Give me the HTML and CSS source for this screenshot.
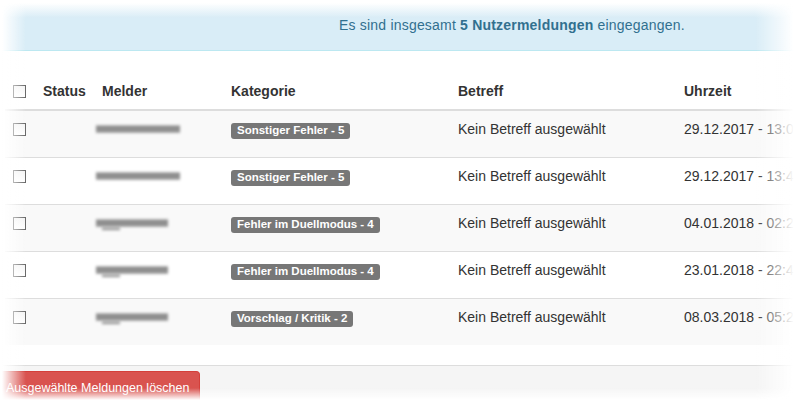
FILE: index.html
```html
<!DOCTYPE html>
<html>
<head>
  <title>Nutzermeldungen</title>
  <link rel="stylesheet" href="styles.css">
</head>
<body>
  <div class="alert">Es sind insgesamt <b>5 Nutzermeldungen</b> eingegangen.</div>

  <table class="reports">
    <colgroup>
      <col class="w-check">
      <col class="w-status">
      <col class="w-user">
      <col class="w-cat">
      <col class="w-subject">
      <col class="w-time">
    </colgroup>
    <thead>
      <tr>
        <th><span class="box"></span></th>
        <th>Status</th>
        <th>Melder</th>
        <th>Kategorie</th>
        <th>Betreff</th>
        <th>Uhrzeit</th>
      </tr>
    </thead>
    <tbody>
      <tr>
        <td><span class="box"></span></td>
        <td></td>
        <td><div class="blur long"></div></td>
        <td><span class="label">Sonstiger Fehler - 5</span></td>
        <td>Kein Betreff ausgewählt</td>
        <td>29.12.2017 - 13:04</td>
      </tr>
      <tr>
        <td><span class="box"></span></td>
        <td></td>
        <td><div class="blur long"></div></td>
        <td><span class="label">Sonstiger Fehler - 5</span></td>
        <td>Kein Betreff ausgewählt</td>
        <td>29.12.2017 - 13:47</td>
      </tr>
      <tr>
        <td><span class="box"></span></td>
        <td></td>
        <td><div class="blur short"></div></td>
        <td><span class="label">Fehler im Duellmodus - 4</span></td>
        <td>Kein Betreff ausgewählt</td>
        <td>04.01.2018 - 02:24</td>
      </tr>
      <tr>
        <td><span class="box"></span></td>
        <td></td>
        <td><div class="blur short"></div></td>
        <td><span class="label">Fehler im Duellmodus - 4</span></td>
        <td>Kein Betreff ausgewählt</td>
        <td>23.01.2018 - 22:43</td>
      </tr>
      <tr>
        <td><span class="box"></span></td>
        <td></td>
        <td><div class="blur short"></div></td>
        <td><span class="label">Vorschlag / Kritik - 2</span></td>
        <td>Kein Betreff ausgewählt</td>
        <td>08.03.2018 - 05:29</td>
      </tr>
    </tbody>
  </table>

  <div class="footer">
    <button class="btn-danger">Ausgewählte Meldungen löschen</button>
  </div>

  <div class="fade"></div>
</body>
</html>
```

FILE: styles.css
```css
html, body {
  margin: 0;
  width: 800px;
  height: 400px;
  overflow: hidden;
  background-color: #fff;
}

body {
  font-family: "Liberation Sans", Arial, sans-serif;
  font-size: 14px;
  line-height: 20px;
  color: #333;
}

.alert {
  padding: 15px 15px 15px 339px;
  background-color: #d9edf7;
  border-bottom: 1px solid #bce8f1;
  color: #31708f;
  letter-spacing: 0.2px;
}

.reports {
  margin: 22px 0 0 5px;
  width: 895px;
  table-layout: fixed;
  border-collapse: collapse;
}

.w-check { width: 30px; }
.w-status { width: 59px; }
.w-user { width: 129px; }
.w-cat { width: 227px; }
.w-subject { width: 226px; }
.w-time { width: 224px; }

.reports th {
  padding: 8px;
  text-align: left;
  vertical-align: bottom;
  border-bottom: 2px solid #ddd;
  white-space: nowrap;
}

.reports td {
  padding: 8px;
  height: 30px;
  vertical-align: top;
  border-top: 1px solid #ddd;
  white-space: nowrap;
}

.reports tbody tr:nth-child(odd) {
  background-color: #f9f9f9;
}

.box {
  display: inline-block;
  width: 11px;
  height: 11px;
  border: 1px solid #666;
  background: linear-gradient(#f4f4f4, #fff);
  vertical-align: middle;
  margin-top: -2px;
}

.label {
  display: inline-block;
  padding: 2px 6px 3px;
  background-color: #777;
  color: #fff;
  font-size: 11.5px;
  font-weight: bold;
  line-height: 11px;
  border-radius: 3px;
}

.blur {
  position: relative;
  height: 8px;
  margin-top: 6px;
  background: linear-gradient(#c8c8c8, #7a7a7a 30%, #a0a0a0 55%, #7a7a7a 75%, #c8c8c8);
  filter: blur(1.6px);
}

.blur.long {
  width: 84px;
  margin-left: -6px;
}

.blur.short {
  width: 72px;
  margin-left: -6px;
}

.blur.short::after {
  content: "";
  position: absolute;
  left: 6px;
  top: 9px;
  width: 18px;
  height: 2px;
  background-color: #888;
}

.footer {
  margin-top: 20px;
  padding-top: 5px;
  border-top: 1px solid #ddd;
  background-color: #f5f5f5;
  height: 60px;
}

.btn-danger {
  display: block;
  padding: 6px 10px 6px 6px;
  border: 1px solid #d43f3a;
  border-left: 0;
  border-radius: 0 4px 4px 0;
  background-color: #d9534f;
  color: #fff;
  font-family: "Liberation Sans", Arial, sans-serif;
  font-size: 12.5px;
  line-height: 20px;
}

.fade {
  position: fixed;
  top: 0;
  left: 0;
  right: 0;
  bottom: 0;
  pointer-events: none;
  background:
    linear-gradient(to right, #fff 2px, rgba(255, 255, 255, 0) 26px),
    linear-gradient(to left, #fff 6px, rgba(255, 255, 255, 0) 45px),
    linear-gradient(to bottom, #fff 3px, rgba(255, 255, 255, 0) 18px),
    linear-gradient(to top, #fff 0, rgba(255, 255, 255, 0) 12px);
}
```
